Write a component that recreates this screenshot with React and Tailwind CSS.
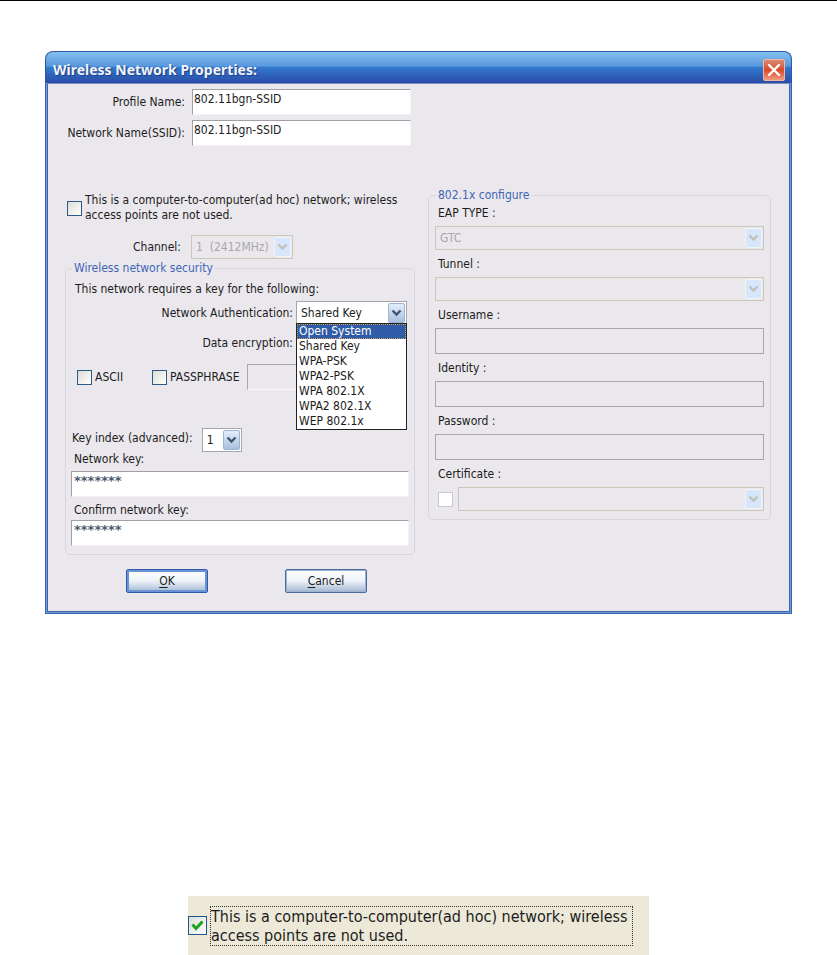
import React, { useState } from 'react';
import clsx from 'clsx';

const AUTH_MODES = ['Open System', 'Shared Key', 'WPA-PSK', 'WPA2-PSK', 'WPA 802.1X', 'WPA2 802.1X', 'WEP 802.1x'];

const Chevron = ({ disabled }) => (
    <span
        className={clsx(
            'pointer-events-none absolute right-0.5 top-0.5 bottom-0.5 flex w-[17px] items-center justify-center rounded-xs border',
            disabled ? 'border-[#f3f4f4] bg-[#d6e6fb]' : 'border-[#9db4d6] bg-linear-to-b from-[#e3eefb] to-[#a9c0de]'
        )}
    >
        <svg width="11" height="8" viewBox="0 0 11 8" fill="none" aria-hidden="true">
            <path d="M1.5 1.5 5.5 5.5 9.5 1.5" stroke={disabled ? '#c3c1b8' : '#44546f'} strokeWidth="2.4" />
        </svg>
    </span>
);

const Select = ({ id, value, options = [], disabled, className, label }) => (
    <span className={clsx('relative block h-6', className)}>
        <select
            id={id}
            aria-label={label}
            defaultValue={value}
            disabled={disabled}
            className={clsx(
                'block h-6 w-full appearance-none border pl-1 pr-5 opacity-100 outline-none',
                disabled ? 'border-[#cac8b9] bg-[#ebe8ed] text-[#a9a7a9]' : 'border-[#a3a6ad] bg-white text-[#1c1c1c]'
            )}
        >
            {options.map((option) => (
                <option key={option}>{option}</option>
            ))}
        </select>
        <Chevron disabled={disabled} />
    </span>
);

const TextBox = ({ id, value, masked }) => (
    <input
        id={id}
        type="text"
        defaultValue={value}
        className={clsx(
            'block h-[26px] w-full border border-t-[#a2a0a6] border-l-[#a2a0a6] border-r-[#f4f2f6] border-b-[#f4f2f6] bg-white outline-none',
            masked ? "pb-2 pl-0.5 font-['DejaVu_Sans'] text-[13px] font-bold text-[#4a5a6c]" : 'pb-[7px] pl-px'
        )}
    />
);

const CheckBox = ({ id, disabled }) => (
    <input
        id={id}
        type="checkbox"
        disabled={disabled}
        className={clsx(
            'size-[15px] shrink-0 appearance-none border',
            disabled ? 'border-[#c9c7cf] bg-white' : 'border-[#2b5c88] bg-linear-to-br from-[#dcdcd7] to-white'
        )}
    />
);

const Group = ({ title, className, children }) => (
    <fieldset className={clsx('min-w-0 rounded-[5px] border border-[#d8d6dc]', className)}>
        <legend className="ml-px px-0.5 text-[#3f66b5]">{title}</legend>
        {children}
    </fieldset>
);

const Field = ({ id, label, children }) => (
    <div className="flex flex-col gap-[5px]">
        <label htmlFor={id} className="pl-[3px]">{label}</label>
        {children}
    </div>
);

const DisabledBox = ({ id }) => (
    <input id={id} type="text" disabled className="block h-[26px] w-full border border-[#a9a7ae] bg-[#ebe8ed]" />
);

const PushButton = ({ hotkey, rest, primary }) => (
    <button
        type="button"
        className={clsx(
            'h-6 w-[82px] rounded-xs border bg-linear-to-b from-white via-[#eef3f8] to-[#a3b7d3]',
            primary ? 'border-[#2f5aa8] ring-2 ring-inset ring-[#6a92d6]' : 'border-[#4a6b9c] ring-1 ring-inset ring-[#9db3d2]'
        )}
    >
        <span className="underline underline-offset-2">{hotkey}</span>{rest}
    </button>
);

const TitleBar = () => (
    <header className="flex h-[33px] items-center justify-between rounded-t-lg border border-[#2f57a8] border-b-[#7d8fc0] bg-[linear-gradient(#83c0ee,#5a98df_45%,#3279cc_50%,#2a4ca8)] pl-[7px] pr-1.5 pt-1">
        <h1 className="font-['Noto_Sans'] text-[14px] font-bold text-[#f1f4fa] [text-shadow:1px_1px_1px_#1d3b86]">
            Wireless Network Properties:
        </h1>
        <button
            type="button"
            aria-label="Close"
            className="flex size-[22px] items-center justify-center rounded-xs border border-[#f0b8a4] bg-linear-to-b from-[#d98a78] via-[#d9481f] to-[#ee9a80]"
        >
            <svg width="14" height="14" viewBox="0 0 14 14" fill="none" aria-hidden="true">
                <path d="M2 2 12 12M12 2 2 12" stroke="#fff" strokeWidth="2.4" strokeLinecap="round" />
            </svg>
        </button>
    </header>
);

const AuthSelect = () => {
    const [active, setActive] = useState('Open System');

    return (
        <div className="relative w-[111px]">
            <Select id="auth" value="Shared Key" options={AUTH_MODES} />
            <ul role="listbox" aria-label="Network Authentication" className="absolute inset-x-0 top-[22px] z-10 border border-[#222] bg-white">
                {AUTH_MODES.map((mode) => (
                    <li
                        key={mode}
                        role="option"
                        aria-selected={mode === active}
                        onMouseEnter={() => setActive(mode)}
                        className={clsx(
                            'pl-0.5',
                            mode === active && 'bg-[#2f5ba9] text-white outline-1 -outline-offset-1 outline-dotted outline-[#c9a24d]'
                        )}
                    >
                        {mode}
                    </li>
                ))}
            </ul>
        </div>
    );
};

const SecurityGroup = () => (
    <Group title="Wireless network security" className="mt-0.5 px-[5px] pb-2">
        <p className="mt-1.5 pl-1">This network requires a key for the following:</p>

        <div className="mt-1 flex items-center justify-end gap-[3px] pr-0.5">
            <label htmlFor="auth">Network Authentication:</label>
            <AuthSelect />
        </div>
        <div className="mt-1.5 flex items-center justify-end gap-[3px] pr-0.5">
            <label htmlFor="encryption">Data encryption:</label>
            <Select id="encryption" value="WEP" options={['WEP']} className="w-[111px]" />
        </div>

        <div className="mt-[9px] flex items-center pl-1.5">
            <CheckBox id="ascii" />
            <label htmlFor="ascii" className="w-[60px] pl-[3px]">ASCII</label>
            <CheckBox id="passphrase" />
            <label htmlFor="passphrase" className="w-20 pl-[3px]">PASSPHRASE</label>
            <input
                type="text"
                disabled
                aria-label="Passphrase"
                className="h-[26px] w-[150px] border border-t-[#a9a7ae] border-l-[#a9a7ae] border-r-[#f6f4f8] border-b-[#f6f4f8] bg-[#ebe8ed]"
            />
        </div>

        <div className="mt-[38px] flex items-center gap-[9px] pl-px">
            <label htmlFor="key-index" className="pb-1">Key index (advanced):</label>
            <Select id="key-index" value="1" options={['1', '2', '3', '4']} className="w-10" />
        </div>

        <label htmlFor="key" className="block pl-[3px]">Network key:</label>
        <div className="mt-1">
            <TextBox id="key" value="*******" masked />
        </div>
        <label htmlFor="confirm-key" className="mt-1.5 block pl-[3px]">Confirm network key:</label>
        <div className="mt-0.5">
            <TextBox id="confirm-key" value="*******" masked />
        </div>
    </Group>
);

const EapGroup = () => (
    <Group title="802.1x configure" className="flex-1 self-start px-1.5 pb-2">
        <div className="flex flex-col gap-[7px] pt-[3px]">
            <Field id="eap" label="EAP TYPE :">
                <Select id="eap" value="GTC" options={['GTC']} disabled />
            </Field>
            <Field id="tunnel" label="Tunnel :">
                <Select id="tunnel" disabled />
            </Field>
            <Field id="username" label="Username :">
                <DisabledBox id="username" />
            </Field>
            <Field id="identity" label="Identity :">
                <DisabledBox id="identity" />
            </Field>
            <Field id="password" label="Password :">
                <DisabledBox id="password" />
            </Field>
            <Field id="certificate" label="Certificate :">
                <div className="flex items-center gap-[5px] pl-[3px]">
                    <CheckBox id="certificate" disabled />
                    <Select label="Certificate list" disabled className="flex-1" />
                </div>
            </Field>
        </div>
    </Group>
);

const WirelessDialog = () => (
    <section className="mx-[45px] mt-[50px] text-[12px] leading-[15px]">
        <TitleBar />
        {/* three-tone window frame */}
        <div className="border-x border-b border-[#3a62ae] bg-[#6f9bdb] px-px pb-px">
            <div className="border-x border-b border-[#3f64ab] bg-[#ebe8ed] pb-[18px]">
                <div className="grid grid-cols-[137px_219px] items-center gap-x-[7px] gap-y-[5px] pt-[5px]">
                    <label htmlFor="profile" className="text-right">Profile Name:</label>
                    <TextBox id="profile" value="802.11bgn-SSID" />
                    <label htmlFor="ssid" className="text-right">Network Name(SSID):</label>
                    <TextBox id="ssid" value="802.11bgn-SSID" />
                </div>

                <div className="mt-[42px] flex gap-[13px] pl-[17px] pr-[18px]">
                    <div className="w-[350px] shrink-0">
                        <div className="flex items-center gap-[3px] pl-0.5 pt-[5px]">
                            <CheckBox id="adhoc" />
                            <label htmlFor="adhoc" className="whitespace-nowrap">
                                This is a computer-to-computer(ad hoc) network; wireless
                                <br />
                                access points are not used.
                            </label>
                        </div>
                        <div className="mt-3 flex items-center gap-2.5">
                            <label htmlFor="channel" className="w-[116px] text-right">Channel:</label>
                            <Select
                                id="channel"
                                value={'1\u00a0\u00a0(2412MHz)'}
                                options={['1\u00a0\u00a0(2412MHz)']}
                                disabled
                                className="w-[102px]"
                            />
                        </div>
                        <SecurityGroup />
                    </div>
                    <EapGroup />
                </div>

                <div className="mt-3.5 flex gap-[77px] pl-[78px]">
                    <PushButton hotkey="O" rest="K" primary />
                    <PushButton hotkey="C" rest="ancel" />
                </div>
            </div>
        </div>
    </section>
);

const AdHocOption = () => (
    <div className="mx-auto mt-[282px] flex h-[59px] w-[461px] items-center gap-[3px] bg-[#ece9d8] text-[16px] leading-[19px]">
        <span className="relative size-[19px] shrink-0">
            <input
                id="adhoc-checked"
                type="checkbox"
                defaultChecked
                className="block size-[19px] appearance-none border border-[#1f5487] bg-linear-to-br from-[#dcdcd7] to-white"
            />
            <svg className="pointer-events-none absolute inset-0" width="19" height="19" viewBox="0 0 19 19" fill="none" aria-hidden="true">
                <path d="M4.5 8.5 8 12.5 14.5 5.5" stroke="#21a121" strokeWidth="3" />
            </svg>
        </span>
        <label htmlFor="adhoc-checked" className="w-[423px] border border-dotted border-[#333] whitespace-nowrap">
            This is a computer-to-computer(ad hoc) network; wireless
            <br />
            access points are not used.
        </label>
    </div>
);

const App = () => (
    <main className="border-t border-black bg-white font-['DejaVu_Sans_Condensed','Noto_Sans',sans-serif] text-[#1c1c1c]">
        <WirelessDialog />
        <AdHocOption />
    </main>
);

export default App;
